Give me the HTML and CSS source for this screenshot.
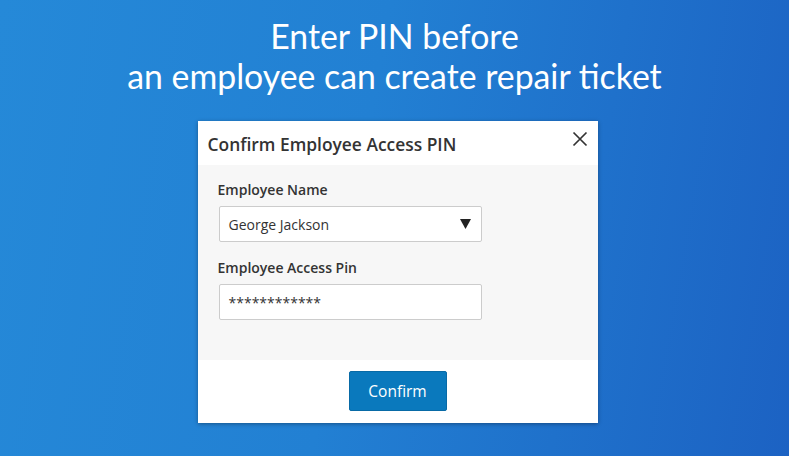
FILE: index.html
```html
<!DOCTYPE html>
<html>
<head>
<meta charset="utf-8">
<link rel="stylesheet" href="styles.css">
</head>
<body>
<div class="page">
  <h1 class="headline">Enter PIN before<br>an employee can create repair ticket</h1>
  <div class="dialog">
    <div class="dialog-header">
      <span class="dialog-title">Confirm Employee Access PIN</span>
      <svg class="close" width="16" height="16" viewBox="0 0 16 16"><path d="M1.5 1.5 L14.5 14.5 M14.5 1.5 L1.5 14.5" stroke="#333" stroke-width="1.7" fill="none"/></svg>
    </div>
    <div class="dialog-body">
      <label class="field-label">Employee Name</label>
      <div class="field select">
        <span>George Jackson</span>
        <svg class="caret" width="11" height="10" viewBox="0 0 11 10"><path d="M0 0 H11 L5.5 10 Z" fill="#222"/></svg>
      </div>
      <label class="field-label">Employee Access Pin</label>
      <div class="field">
        <span class="pin">************</span>
      </div>
    </div>
    <div class="dialog-footer">
      <button class="btn">Confirm</button>
    </div>
  </div>
</div>
</body>
</html>
```
FILE: styles.css
```css
html, body {
  margin: 0;
  padding: 0;
  height: 100%;
}
body {
  background: linear-gradient(100deg, #2589d8 0%, #2280d3 45%, #1c62c3 100%);
  font-family: "Open Sans", sans-serif;
  overflow: hidden;
}
.page {
  display: flex;
  flex-direction: column;
  align-items: center;
  padding-top: 16px;
}
.headline {
  margin: 0;
  font-family: Lato, sans-serif;
  font-weight: 400;
  font-size: 33.8px;
  line-height: 40px;
  color: #fff;
  text-align: center;
}
.dialog {
  margin-top: 25px;
  width: 400px;
  background: #fff;
  box-shadow: 0 1px 4px rgba(0,0,0,0.35);
  margin-left: 6px;
}
.dialog-header {
  height: 44px;
  display: flex;
  align-items: center;
  justify-content: space-between;
  padding: 0 10px 0 10px;
}
.dialog-title {
  font-size: 17.4px;
  font-weight: 600;
  color: #333;
  margin-top: 2px;
}
.close {
  align-self: flex-start;
  margin-top: 10px;
  margin-right: 0;
}
.dialog-body {
  background: #f7f7f7;
  padding: 15px 116px 40px 21px;
  display: flex;
  flex-direction: column;
}
.field-label {
  font-size: 14px;
  font-weight: 600;
  color: #333;
  line-height: 20px;
  margin-bottom: 6px;
  margin-left: -1px;
}
.field {
  box-sizing: border-box;
  height: 36px;
  border: 1px solid #ccc;
  border-radius: 2px;
  background: #fff;
  display: flex;
  align-items: center;
  justify-content: space-between;
  padding: 0 10px 0 9px;
  font-size: 14px;
  color: #333;
  margin-bottom: 16px;
}
.field:last-child {
  margin-bottom: 0;
}
.dialog-footer {
  height: 63px;
  box-sizing: border-box;
  padding-top: 11px;
  display: flex;
  justify-content: center;
  align-items: flex-start;
}
.btn {
  width: 98px;
  height: 40px;
  background: #0a79bd;
  border: 1px solid #086aa6;
  border-radius: 2px;
  color: #fff;
  font-family: "Open Sans", sans-serif;
  font-size: 15.5px;
  padding: 0;
}
```
